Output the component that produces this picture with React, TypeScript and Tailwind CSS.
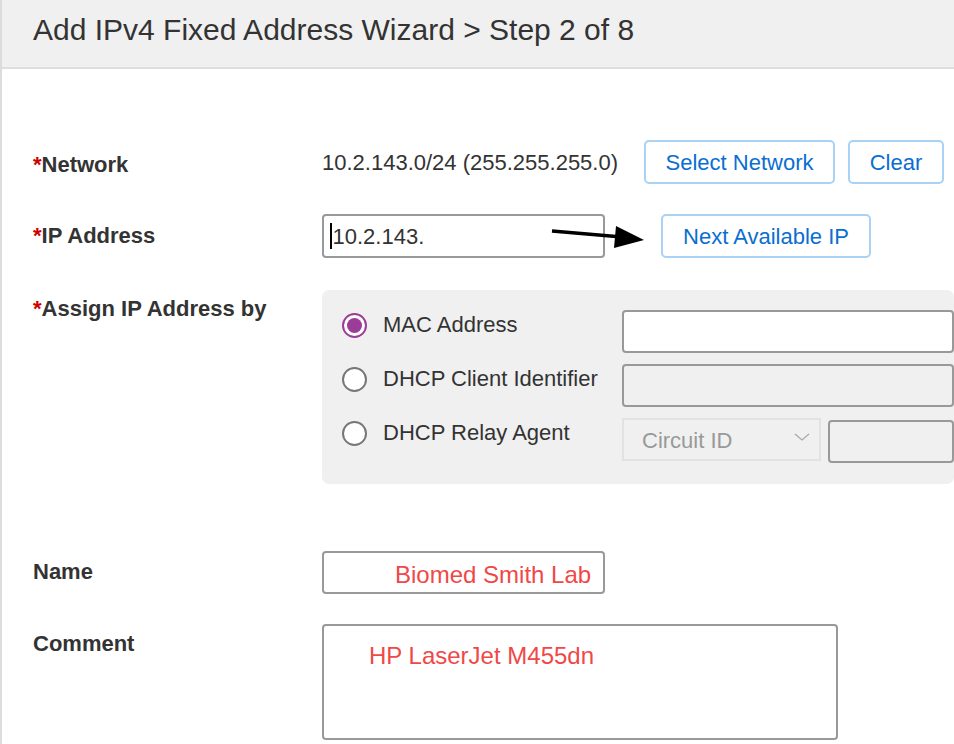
const font = { fontFamily: '"Liberation Sans", Arial, Helvetica, sans-serif' };

function Label({ text, required }: { text: string; required?: boolean }) {
  return (
    <div className="w-[289px] shrink-0 text-[22px] leading-[26px] font-bold text-[#333]">
      {required && <span className="text-[#cc0000]">*</span>}
      {text}
    </div>
  );
}

function Radio({ checked }: { checked?: boolean }) {
  return (
    <div
      className={`w-[25px] h-[25px] rounded-full border-2 bg-white flex items-center justify-center shrink-0 ${
        checked ? "border-[#9b3d98]" : "border-[#777]"
      }`}
    >
      {checked && <div className="w-[15px] h-[15px] rounded-full bg-[#9b3d98]" />}
    </div>
  );
}

function BlueButton({ children, className }: { children: React.ReactNode; className?: string }) {
  return (
    <button
      className={`h-[44px] rounded-[5px] border-2 border-[#a9d2f5] bg-white text-[22px] text-[#0a6ed1] ${className ?? ""}`}
    >
      {children}
    </button>
  );
}

export default function App() {
  return (
    <div className="w-[954px] h-[744px] overflow-hidden bg-white border-l-2 border-[#dcdcdc] relative" style={font}>
      <div className="h-[69px] bg-[#f0f0f0] border-b-2 border-[#dedede] pl-[31px] pt-[13px]">
        <h1 className="text-[30px] leading-[34px] text-[#333]">Add IPv4 Fixed Address Wizard &gt; Step 2 of 8</h1>
      </div>

      <div className="pl-[31px] pt-[71px]">
        {/* Network */}
        <div className="flex items-center h-[44px]">
          <div className="pt-[6px]">
            <Label text="Network" required />
          </div>
          <div className="text-[22px] text-[#333] w-[322px]">10.2.143.0/24 (255.255.255.0)</div>
          <BlueButton className="w-[191px]">Select Network</BlueButton>
          <BlueButton className="w-[96px] ml-[13px]">Clear</BlueButton>
        </div>

        {/* IP Address */}
        <div className="flex items-center h-[44px] mt-[30px]">
          <Label text="IP Address" required />
          <div className="w-[283px] h-[44px] rounded-[4px] border-2 border-[#999] flex items-center pl-[6px] text-[22px] text-[#333]">
            <span className="w-[1.5px] h-[26px] bg-black mr-[1px]" />
            10.2.143.
          </div>
          <BlueButton className="w-[210px] ml-[56px]">Next Available IP</BlueButton>
        </div>

        {/* Assign by */}
        <div className="flex mt-[32px]">
          <div className="pt-[6px]">
            <Label text="Assign IP Address by" required />
          </div>
          <div className="w-[700px] h-[194px] rounded-[7px] bg-[#f0f0f0] pl-[20px] pt-[20px] flex flex-col gap-[11px]">
            <div className="flex items-start h-[43px]">
              <div className="flex items-center gap-[16px] w-[280px] pt-[3px]">
                <Radio checked />
                <span className="text-[22px] leading-[26px] text-[#333] -mt-[2px]">MAC Address</span>
              </div>
              <div className="flex-1 h-[43px] rounded-[4px] border-2 border-[#999] bg-white" />
            </div>
            <div className="flex items-start h-[43px]">
              <div className="flex items-center gap-[16px] w-[280px] pt-[3px]">
                <Radio />
                <span className="text-[22px] leading-[26px] text-[#333] -mt-[2px]">DHCP Client Identifier</span>
              </div>
              <div className="flex-1 h-[43px] rounded-[4px] border-2 border-[#999] bg-[#f0f0f0]" />
            </div>
            <div className="flex items-start h-[43px]">
              <div className="flex items-center gap-[16px] w-[280px] pt-[3px]">
                <Radio />
                <span className="text-[22px] leading-[26px] text-[#333] -mt-[2px]">DHCP Relay Agent</span>
              </div>
              <div className="w-[199px] h-[43px] border-2 border-[#e2e2e2] bg-[#f0f0f0] flex items-center justify-between pl-[18px] pr-[8px] text-[22px] text-[#999]">
                <span className="pt-[2px]">Circuit ID</span>
                <svg className="-mt-[6px]" width="18" height="12" viewBox="0 0 18 12" fill="none" stroke="#aaa" strokeWidth="1.3">
                  <path d="M2 3 L9 9 L16 3" />
                </svg>
              </div>
              <div className="flex-1 ml-[7px] mt-[2px] h-[43px] rounded-[4px] border-2 border-[#999] bg-[#f0f0f0]" />
            </div>
          </div>
        </div>

        {/* Name */}
        <div className="flex items-center h-[43px] mt-[67px]">
          <div className="-mt-[2px]">
            <Label text="Name" />
          </div>
          <div className="w-[283px] h-[43px] rounded-[4px] border-2 border-[#999] flex items-center pl-[71px] pt-[5px] text-[24px] text-[#f04848]">
            Biomed Smith Lab
          </div>
        </div>

        {/* Comment */}
        <div className="flex mt-[30px]">
          <div className="pt-[7px]">
            <Label text="Comment" />
          </div>
          <div className="w-[516px] h-[116px] rounded-[4px] border-2 border-[#999] pl-[45px] pt-[16px] text-[24px] leading-[28px] text-[#f04848]">
            HP LaserJet M455dn
          </div>
        </div>
      </div>

      {/* annotation arrow */}
      <svg className="absolute left-[548px] top-[222px]" width="100" height="28" viewBox="0 0 100 28">
        <path d="M2 9 L72 15" stroke="#000" strokeWidth="3.5" />
        <path d="M66 4 L94 18 L64 26 Z" fill="#000" />
      </svg>
    </div>
  );
}
